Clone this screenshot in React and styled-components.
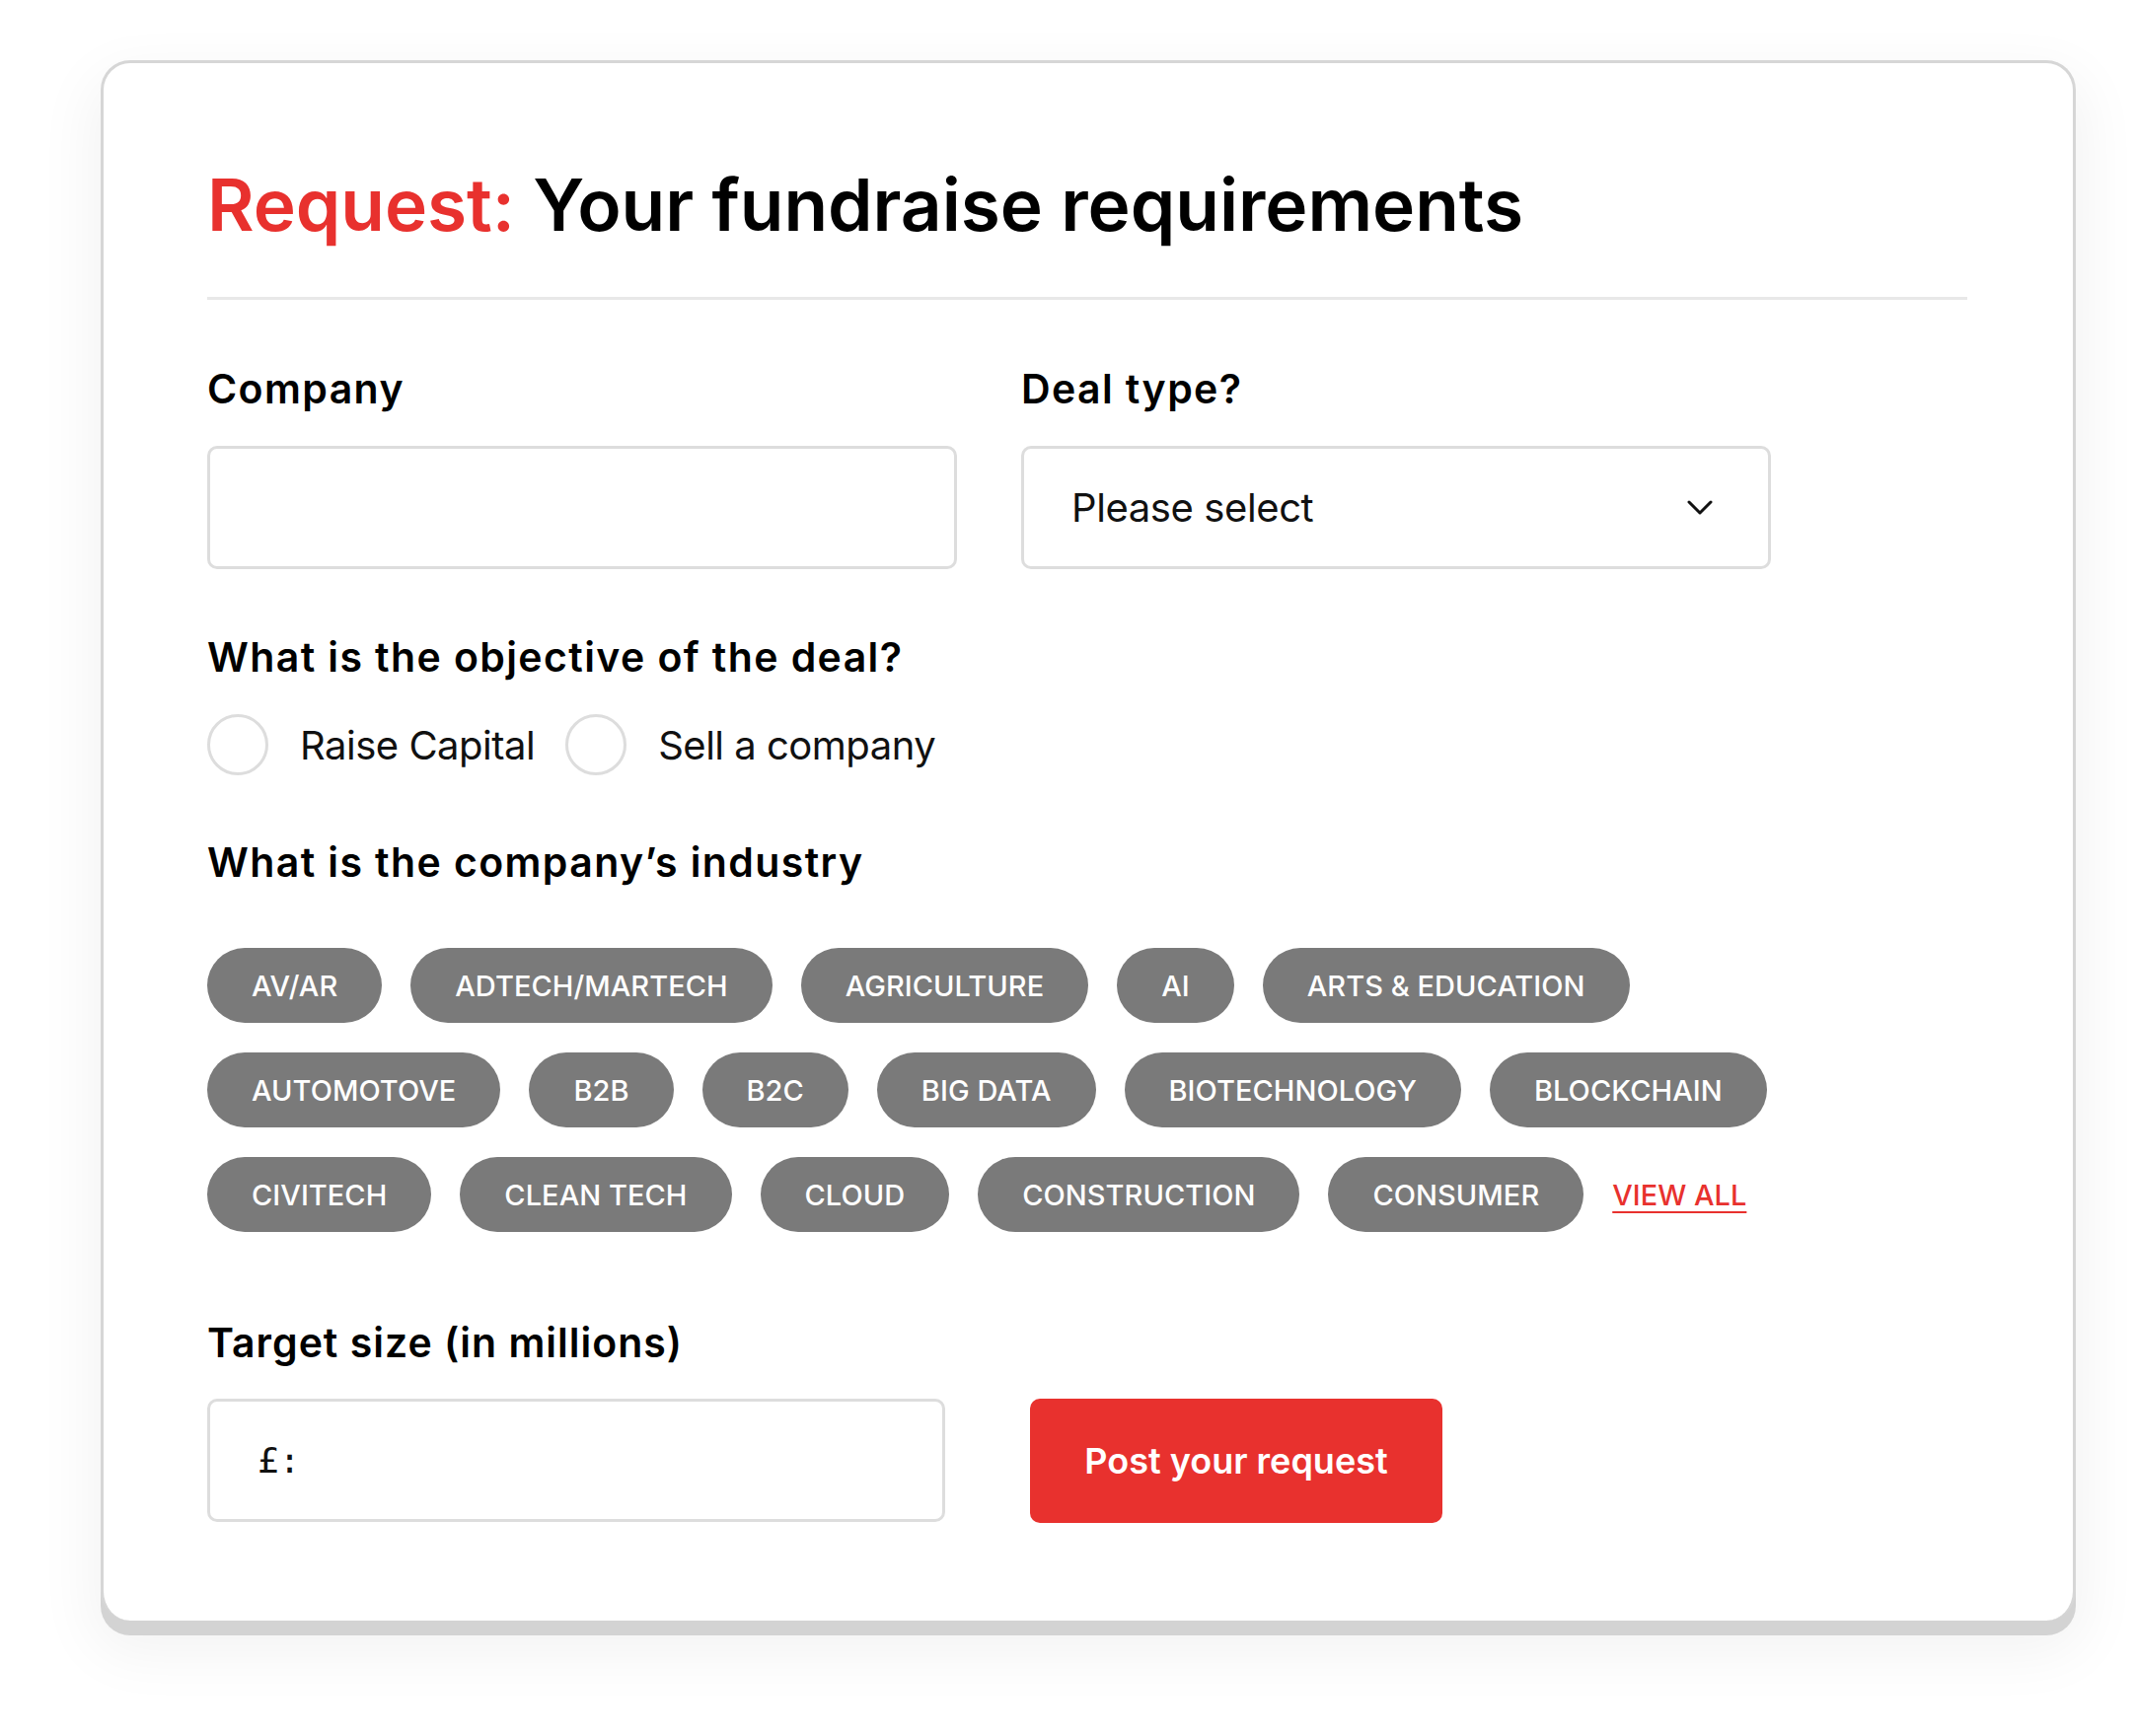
import React from 'react';
import styled, { createGlobalStyle } from 'styled-components';

const GlobalStyle = createGlobalStyle`
  html, body {
    margin: 0;
    padding: 0;
    background: #ffffff;
  }
  body {
    font-family: "Inter", "Noto Sans", sans-serif;
    color: #000;
  }
`;

const RED = '#e8312e';

const INDUSTRIES = [
  ['AV/AR', 'ADTECH/MARTECH', 'AGRICULTURE', 'AI', 'ARTS & EDUCATION'],
  ['AUTOMOTOVE', 'B2B', 'B2C', 'BIG DATA', 'BIOTECHNOLOGY', 'BLOCKCHAIN'],
  ['CIVITECH', 'CLEAN TECH', 'CLOUD', 'CONSTRUCTION', 'CONSUMER'],
];

const App = () => {
  return (
    <Page>
      <GlobalStyle />
      <Card>
        <Title>
          <span>Request:</span> Your fundraise requirements
        </Title>
        <Divider />

        <FieldRow>
          <Field>
            <Label>Company</Label>
            <TextBox />
          </Field>
          <Field>
            <Label>Deal type?</Label>
            <SelectBox>
              <span>Please select</span>
              <svg width="26" height="15" viewBox="0 0 26 15" fill="none">
                <path d="M2 2L13 13L24 2" stroke="#111" strokeWidth="3" strokeLinecap="round" strokeLinejoin="round" />
              </svg>
            </SelectBox>
          </Field>
        </FieldRow>

        <Label $top={69}>What is the objective of the deal?</Label>
        <RadioGroup>
          <RadioOption>
            <RadioCircle />
            Raise Capital
          </RadioOption>
          <RadioOption>
            <RadioCircle />
            Sell a company
          </RadioOption>
        </RadioGroup>

        <Label $top={68}>What is the company’s industry</Label>
        <Tags>
          {INDUSTRIES.map((row, i) => (
            <TagRow key={i}>
              {row.map((tag) => (
                <Tag key={tag}>{tag}</Tag>
              ))}
              {i === INDUSTRIES.length - 1 && <ViewAll href="#">VIEW ALL</ViewAll>}
            </TagRow>
          ))}
        </Tags>

        <Label $top={92} $spacing={1}>Target size (in millions)</Label>
        <SubmitRow>
          <AmountBox>£:</AmountBox>
          <Button>Post your request</Button>
        </SubmitRow>
      </Card>
    </Page>
  );
};

const Page = styled.div`
  padding: 61px 0 100px 102px;
`;

const Card = styled.div`
  width: 2002px;
  box-sizing: border-box;
  background: #fff;
  border: 3px solid #d6d6d6;
  border-bottom: none;
  border-radius: 30px;
  padding: 107px 107px 99px 105px;
  box-shadow: 0 15px 0 0 #d3d3d3, 0 24px 60px 10px rgba(0, 0, 0, 0.05);
`;

const Title = styled.h1`
  margin: 0;
  font-size: 73px;
  line-height: 1;
  font-weight: 600;
  letter-spacing: -0.05px;
  color: #000;

  span {
    color: ${RED};
  }
`;

const Divider = styled.div`
  height: 3px;
  background: #e8e8e8;
  margin-top: 57px;
`;

const FieldRow = styled.div`
  display: flex;
  gap: 65px;
  margin-top: 70px;
`;

const Field = styled.div`
  display: flex;
  flex-direction: column;
  width: 760px;
`;

const Label = styled.div`
  font-size: 41px;
  line-height: 40px;
  font-weight: 600;
  letter-spacing: ${({ $spacing }) => ($spacing !== undefined ? `${$spacing}px` : '1.4px')};
  margin-top: ${({ $top }) => ($top ? `${$top}px` : '0')};
`;

const Box = styled.div`
  height: 125px;
  box-sizing: border-box;
  border: 3px solid #dddddd;
  border-radius: 10px;
  background: #fff;
  display: flex;
  align-items: center;
  font-size: 40px;
  font-weight: 400;
  color: #111;
`;

const TextBox = styled(Box)`
  margin-top: 38px;
`;

const SelectBox = styled(Box)`
  margin-top: 38px;
  justify-content: space-between;
  padding: 0 56px 0 48px;
  letter-spacing: -0.4px;
`;

const RadioGroup = styled.div`
  display: flex;
  gap: 31px;
  margin-top: 38px;
`;

const RadioOption = styled.label`
  display: flex;
  align-items: center;
  gap: 32px;
  font-size: 40px;
  font-weight: 400;
  letter-spacing: -0.5px;
  color: #111;
`;

const RadioCircle = styled.span`
  width: 62px;
  height: 62px;
  box-sizing: border-box;
  border-radius: 50%;
  border: 3px solid #dddddd;
  flex-shrink: 0;
`;

const Tags = styled.div`
  display: flex;
  flex-direction: column;
  gap: 30px;
  margin-top: 67px;
`;

const TagRow = styled.div`
  display: flex;
  align-items: center;
  gap: 29px;
`;

const Tag = styled.span`
  height: 76px;
  display: inline-flex;
  align-items: center;
  padding: 0 45px;
  border-radius: 38px;
  background: #7a7a7a;
  color: #fff;
  font-size: 29px;
  font-weight: 500;
  letter-spacing: 0.05px;
  white-space: nowrap;
`;

const ViewAll = styled.a`
  color: ${RED};
  font-size: 29px;
  font-weight: 500;
  text-decoration: underline;
  text-decoration-thickness: 2px;
  text-underline-offset: 6px;
`;

const SubmitRow = styled.div`
  display: flex;
  gap: 86px;
  margin-top: 37px;
`;

const AmountBox = styled(Box)`
  width: 748px;
  padding-left: 48px;
  font-family: "DejaVu Sans Mono", monospace;
  font-size: 36px;
`;

const Button = styled.button`
  width: 418px;
  height: 126px;
  border: none;
  border-radius: 10px;
  background: ${RED};
  color: #fff;
  font-family: "Inter", sans-serif;
  font-size: 36px;
  font-weight: 600;
  cursor: pointer;
`;

export default App;
